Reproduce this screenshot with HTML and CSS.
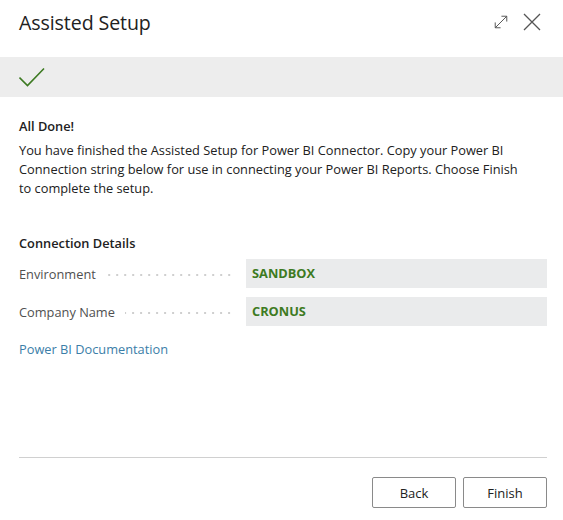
FILE: index.html
```html
<!DOCTYPE html>
<html>
<head>
<meta charset="utf-8">
<link rel="stylesheet" href="styles.css">
</head>
<body>
<div class="dialog">
  <header class="header">
    <h1 class="title">Assisted Setup</h1>
    <div class="actions">
      <svg class="icon" width="18" height="18" viewBox="0 0 18 18" fill="none" stroke="#555" stroke-width="1.1">
        <path d="M2.5 15.5 L15.5 2.5"/>
        <path d="M9.5 2.5 H15.5 V8.5"/>
        <path d="M2.5 9.5 V15.5 H8.5"/>
      </svg>
      <svg class="icon" width="18" height="18" viewBox="0 0 18 18" fill="none" stroke="#555" stroke-width="1.3">
        <path d="M1 1 L17 17 M17 1 L1 17"/>
      </svg>
    </div>
  </header>
  <div class="band">
    <svg width="26" height="20" viewBox="0 0 26 20" fill="none" stroke="#3d7a22" stroke-width="1.6">
      <path d="M0.5 10.5 L8.5 18.5 L25 1.5"/>
    </svg>
  </div>
  <main class="content">
    <h2 class="heading">All Done!</h2>
    <p class="text">You have finished the Assisted Setup for Power BI Connector. Copy your Power BI Connection string below for use in connecting your Power BI Reports. Choose Finish to complete the setup.</p>
    <h2 class="heading section">Connection Details</h2>
    <div class="field">
      <span class="label">Environment</span>
      <span class="leader"></span>
      <span class="value">SANDBOX</span>
    </div>
    <div class="field">
      <span class="label">Company Name</span>
      <span class="leader"></span>
      <span class="value">CRONUS</span>
    </div>
    <a class="link" href="#">Power BI Documentation</a>
  </main>
  <footer class="footer">
    <button class="btn">Back</button>
    <button class="btn">Finish</button>
  </footer>
</div>
</body>
</html>
```

FILE: styles.css
```css
html, body {
  margin: 0;
  padding: 0;
  background: #fff;
}
body {
  font-family: "Open Sans", "Noto Sans", sans-serif;
  font-size: 12.8px;
  color: #212121;
  width: 563px;
  height: 520px;
  overflow: hidden;
}
.dialog {
  display: flex;
  flex-direction: column;
  height: 520px;
}
.header {
  height: 44px;
  display: flex;
  align-items: center;
  justify-content: space-between;
  padding: 0 22px 0 19px;
  margin-bottom: 13px;
}
.title {
  margin: 0;
  font-size: 19.6px;
  font-weight: 400;
  color: #212121;
  letter-spacing: -0.1px;
}
.actions {
  display: flex;
  align-items: center;
  gap: 14px;
}
.icon {
  display: block;
}
.actions .icon:first-child {
  width: 16px;
  height: 16px;
}
.band {
  height: 40px;
  background: #ededed;
  display: flex;
  align-items: center;
  padding-left: 19px;
}
.content {
  padding: 0 16px 0 19px;
  flex: 1;
}
.heading {
  margin: 20px 0 0;
  font-size: 12.8px;
  font-weight: 600;
  line-height: 19px;
  color: #212121;
}
.heading.section {
  margin-top: 36px;
}
.text {
  margin: 5px 0 0;
  max-width: 510px;
  line-height: 19px;
  color: #212121;
}
.field {
  display: flex;
  align-items: center;
  height: 29px;
  margin-top: 6px;
}
.field + .field {
  margin-top: 9px;
}
.label {
  color: #505050;
}
.leader {
  flex: 1;
  height: 2px;
  margin: 2px 10px 0 10px;
  background-image: linear-gradient(to right, #cfcfcf 2px, transparent 2px);
  background-size: 8px 2px;
  background-repeat: repeat-x;
  background-position: right center;
}
.value {
  width: 295px;
  height: 29px;
  line-height: 29px;
  background: #eaebec;
  padding-left: 6px;
  font-weight: 700;
  color: #3d7a22;
}
.link {
  display: block;
  margin-top: 14px;
  line-height: 19px;
  color: #3b7ea8;
  text-decoration: none;
}
.footer {
  margin: 0 16px 12px 19px;
  border-top: 1px solid #d0d0d0;
  padding-top: 19px;
  display: flex;
  justify-content: flex-end;
  gap: 7px;
}
.btn {
  width: 84px;
  height: 31px;
  background: #fff;
  border: 1px solid #8a8a8a;
  border-radius: 2px;
  font-family: inherit;
  font-size: 13px;
  color: #212121;
  padding: 0;
}
```
